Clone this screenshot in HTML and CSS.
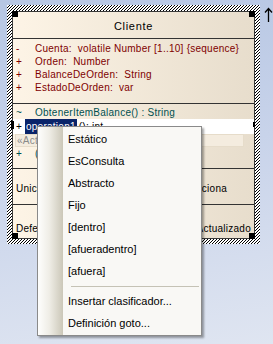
FILE: index.html
```html
<!DOCTYPE html>
<html lang="es">
<head>
<meta charset="utf-8">
<link rel="stylesheet" href="styles.css">
</head>
<body>
<div class="canvas">
  <div class="sel">
    <div class="cls">
      <span class="handle tl"></span>
      <span class="handle tr"></span>
      <span class="handle bl"></span>
      <span class="handle br"></span>
      <div class="title">Cliente</div>
      <div class="attrs">
        <div class="row"><span class="vis">-</span><span>Cuenta:&nbsp; volatile Number [1..10] {sequence}</span></div>
        <div class="row"><span class="vis">+</span><span>Orden:&nbsp; Number</span></div>
        <div class="row"><span class="vis">+</span><span>BalanceDeOrden:&nbsp; String</span></div>
        <div class="row"><span class="vis">+</span><span>EstadoDeOrden:&nbsp; var</span></div>
      </div>
      <div class="ops">
        <div class="row"><span class="vis">~</span><span>ObtenerItemBalance() : String</span></div>
        <div class="row edit"><span class="vis short">+</span><span class="hl">operation1</span><span class="rest">(): int</span></div>
        <div class="stereo">«Action»</div>
        <div class="row"><span class="vis">+</span><span>()</span></div>
      </div>
      <div class="c3"><span>Unico</span><span>Selecciona</span></div>
      <div class="c4"><span>Defecto</span><span>Actualizado</span></div>
    </div>
  </div>
  <svg class="arrow" width="9" height="15" viewBox="0 0 9 15">
    <path d="M4.5 1.5V15M1 5.5L4.5 1.5L8 5.5" fill="none" stroke="#000" stroke-width="1.3"/>
  </svg>
</div>
<div class="menu">
  <div class="item">Estático</div>
  <div class="item">EsConsulta</div>
  <div class="item">Abstracto</div>
  <div class="item">Fijo</div>
  <div class="item">[dentro]</div>
  <div class="item">[afueradentro]</div>
  <div class="item">[afuera]</div>
  <div class="sep"></div>
  <div class="item">Insertar clasificador...</div>
  <div class="item">Definición goto...</div>
</div>
</body>
</html>
```
FILE: styles.css
```css
* { box-sizing: border-box; }
html, body { margin: 0; }
body {
  width: 273px;
  height: 344px;
  overflow: hidden;
  position: relative;
  background: linear-gradient(172deg, #b6c6e3 0%, #c8d3ea 45%, #dfe5f1 100%);
  font-family: "Liberation Sans", Arial, sans-serif;
}
.canvas {
  display: flex;
  align-items: flex-start;
  padding: 5px 0 0 7px;
}
.sel {
  padding: 6px 5px 5px 5px;
  background: #fff url("data:image/svg+xml,%3Csvg xmlns='http://www.w3.org/2000/svg' width='3' height='3'%3E%3Cpath d='M2 0h1v1H2zM1 1h1v1H1zM0 2h1v1H0z' fill='%23000'/%3E%3C/svg%3E");
}
.cls {
  position: relative;
  width: 243px;
  height: 228px;
  border: 1px solid #3a3a3a;
  background: linear-gradient(to right, #fdf4e6, #e7ddcc);
  font-size: 10px;
  letter-spacing: 0.25px;
  color: #000;
}
.handle {
  position: absolute;
  width: 6px;
  height: 6px;
  background: #000;
}
.tl { left: -1px; top: -1px; }
.tr { right: -1px; top: -1px; }
.bl { left: -1px; bottom: -1px; }
.br { right: -1px; bottom: -1px; }
.title {
  height: 27px;
  border-bottom: 1px solid #333;
  display: flex;
  justify-content: center;
  align-items: center;
  padding-top: 2px;
  font-size: 11px;
  letter-spacing: 0.7px;
}
.attrs {
  height: 65px;
  border-bottom: 1px solid #333;
  padding-top: 3px;
  color: #800000;
}
.row {
  display: flex;
  height: 13px;
  line-height: 13px;
  padding-left: 3px;
  white-space: nowrap;
}
.vis { width: 19px; flex: none; }
.vis.short { width: 9px; }
.ops {
  height: 65px;
  border-bottom: 1px solid #333;
  padding-top: 2px;
  color: #005050;
}
.edit {
  position: relative;
  height: 15px;
  line-height: 15px;
  background: #fff;
  color: #000;
}
.edit::before {
  content: "";
  position: absolute;
  left: -2px;
  top: 2px;
  width: 3px;
  height: 8px;
  background: #000;
}
.edit::after {
  content: "";
  position: absolute;
  right: -1px;
  top: 3px;
  width: 2px;
  height: 5px;
  background: #000;
}
.hl {
  background: #0a246a;
  color: #fff;
  padding: 0 1px;
}
.rest { padding-left: 2px; }
.stereo {
  height: 13px;
  margin: 0 10px 0 2px;
  background: #f4ecdf;
  border: 1px solid #e6dcca;
  color: #8a8a8a;
  line-height: 11px;
  padding-left: 1px;
}
.c3 {
  height: 36px;
  border-bottom: 1px solid #333;
  display: flex;
  justify-content: space-between;
  align-items: center;
  padding: 4px 27px 0 3px;
  line-height: 13px;
}
.c4 {
  height: 33px;
  display: flex;
  justify-content: space-between;
  align-items: flex-end;
  padding: 0 3px 3px 3px;
  line-height: 13px;
}
.arrow {
  margin: 2px 0 0 4px;
}
.menu {
  position: absolute;
  left: 37px;
  top: 126px;
  width: 165px;
  padding: 1px 0 1px;
  border: 1px solid #8a8a8a;
  background: linear-gradient(to right, #fefefd, #efede6 45%, #cbc7b8) 0 0 / 25px 100% no-repeat, #f9f8f5;
  box-shadow: 2px 2px 2px rgba(0, 0, 0, 0.35);
  font-size: 11px;
  color: #000;
}
.item {
  height: 22px;
  line-height: 22px;
  padding-left: 30px;
  white-space: nowrap;
}
.sep {
  height: 1px;
  margin: 4px 2px 3px 33px;
  background: #c5c2b5;
}
```
